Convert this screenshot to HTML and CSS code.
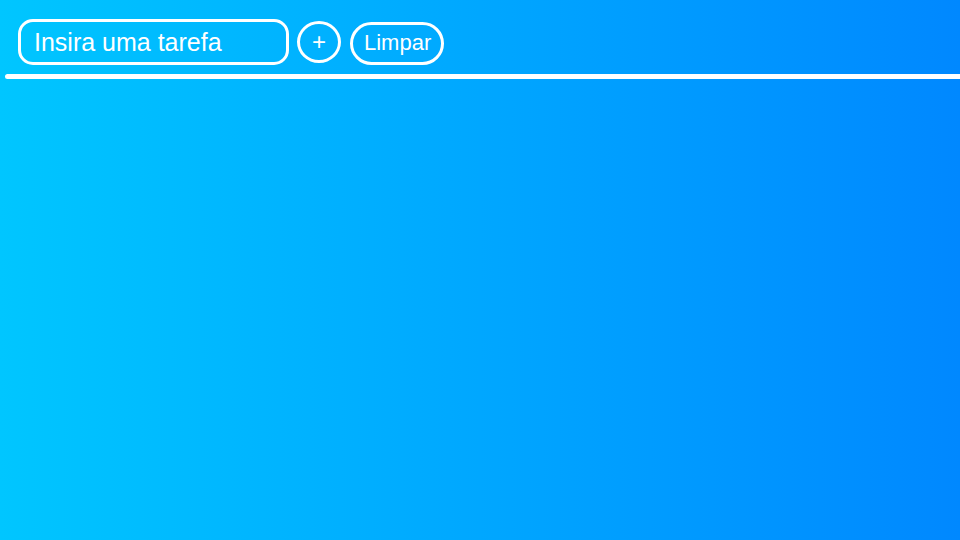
FILE: index.html
```html
<!DOCTYPE html>
<html lang="pt">
<head>
<meta charset="utf-8">
<title>Tarefas</title>
<link rel="stylesheet" href="styles.css">
</head>
<body>
<header class="toolbar">
  <input class="task-input" type="text" placeholder="Insira uma tarefa">
  <button class="btn-add" type="button">+</button>
  <button class="btn-clear" type="button">Limpar</button>
</header>
<div class="divider"></div>
<ul class="task-list"></ul>
</body>
</html>
```
FILE: styles.css
```css
html, body {
  margin: 0;
  padding: 0;
}
body {
  min-height: 100vh;
  background: linear-gradient(to right, #00c6ff, #0088ff);
  font-family: "Liberation Sans", Arial, sans-serif;
  color: #fff;
  overflow: hidden;
}
.toolbar {
  display: flex;
  align-items: center;
  padding: 19px 0 0 18px;
}
.task-input {
  box-sizing: border-box;
  width: 271px;
  height: 46px;
  border: 3px solid #fff;
  border-radius: 15px;
  background: transparent;
  color: #fff;
  font-family: "Liberation Sans", Arial, sans-serif;
  font-size: 25px;
  padding: 0 0 0 13px;
  outline: none;
}
.task-input::placeholder {
  color: #fff;
  opacity: 1;
}
.btn-add {
  box-sizing: border-box;
  display: flex;
  align-items: center;
  justify-content: center;
  width: 44px;
  height: 42px;
  margin-left: 8px;
  border: 3px solid #fff;
  border-radius: 50%;
  background: transparent;
  color: #fff;
  font-family: "Liberation Sans", Arial, sans-serif;
  font-size: 24px;
  padding: 0;
  line-height: 1;
}
.btn-clear {
  box-sizing: border-box;
  height: 43px;
  margin-left: 9px;
  margin-top: 2px;
  border: 3px solid #fff;
  border-radius: 22px;
  background: transparent;
  color: #fff;
  font-family: "Liberation Sans", Arial, sans-serif;
  font-size: 22px;
  padding: 0 10px 0 11px;
}
.divider {
  height: 5px;
  margin: 9px 0 0 5px;
  background: #fff;
  border-radius: 3px 0 0 3px;
}
.task-list {
  margin: 0;
  padding: 0;
  list-style: none;
}
```
